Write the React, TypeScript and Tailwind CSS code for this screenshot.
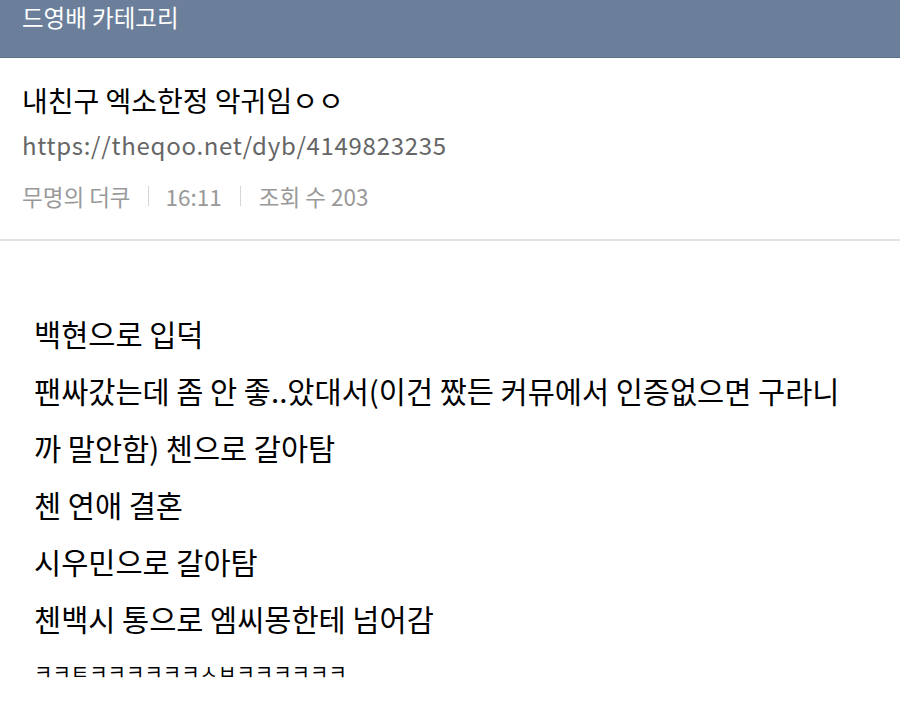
import React from 'react';

const lines = [
  '백현으로 입덕',
  '팬싸갔는데 좀 안 좋..았대서(이건 짰든 커뮤에서 인증없으면 구라니',
  '까 말안함) 첸으로 갈아탐',
  '첸 연애 결혼',
  '시우민으로 갈아탐',
  '첸백시 통으로 엠씨몽한테 넘어감',
];

export default function App() {
  return (
    <div
      className="w-[900px] h-[722px] overflow-hidden bg-white"
      style={{ fontFamily: '"Noto Sans CJK KR", "Noto Sans", sans-serif' }}
    >
      <div className="h-[58px] bg-[#6b7f9b] border-b border-[#5d708b] px-[22px] pt-[1px]">
        <span className="text-[23.5px] leading-[32px] text-white">드영배 카테고리</span>
      </div>

      <div className="px-[22px] pt-[25px] border-b-2 border-[#e3e3e3] pb-[28px]">
        <h1 className="text-[28px] leading-[34px] text-black">내친구 엑소한정 악귀임ㅇㅇ</h1>
        <div className="mt-[13px] text-[24px] leading-[30px] tracking-[0.7px] text-[#666]">
          https://theqoo.net/dyb/4149823235
        </div>
        <div className="mt-[21px] flex items-center text-[22.5px] leading-[30px] text-[#999]">
          <span>무명의 더쿠</span>
          <span className="mx-[17px] h-[20px] w-px bg-[#d6d6d6]" />
          <span>16:11</span>
          <span className="mx-[18px] h-[20px] w-px bg-[#d6d6d6]" />
          <span>조회 수 203</span>
        </div>
      </div>

      <div className="px-[34px] pt-[64px]">
        {lines.map((line, i) => (
          <div key={i} className="text-[29.5px] leading-[57px] text-black whitespace-nowrap">
            {line}
          </div>
        ))}
        <div className="text-[20px] leading-[50px] text-black whitespace-nowrap">
          ㅋㅋㅌㅋㅋㅋㅋㅋㅋㅅㅂㅋㅋㅋㅋㅋㅋ
        </div>
      </div>
    </div>
  );
}
